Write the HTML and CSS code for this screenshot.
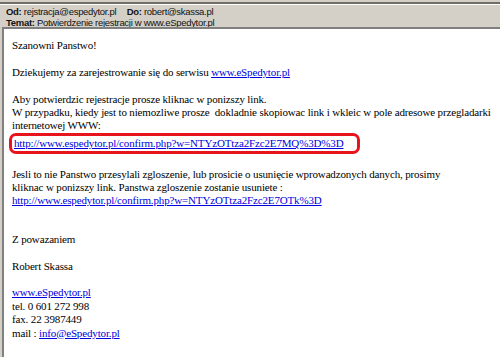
FILE: index.html
```html
<!DOCTYPE html>
<html lang="pl">
<head>
    <meta charset="UTF-8">
    <title>Potwierdzenie rejestracji</title>
    <link rel="stylesheet" href="styles.css">
</head>
<body>
    <div class="header">
        <div class="row">
            <b>Od:</b> <span>rejstracja@espedytor.pl</span>
            <b class="to">Do:</b> <span>robert@skassa.pl</span>
        </div>
        <div class="row">
            <b>Temat:</b> <span>Potwierdzenie rejestracji w www.eSpedytor.pl</span>
        </div>
    </div>

    <div class="message">
        <p>Szanowni Panstwo!</p>
        <p>Dziekujemy za zarejestrowanie się do serwisu <a href="#">www.eSpedytor.pl</a></p>
        <p>Aby potwierdzic rejestracje prosze kliknac w ponizszy link.<br>
        W przypadku, kiedy jest to niemozliwe prosze&nbsp; dokladnie skopiowac link i wkleic w pole adresowe przegladarki<br>
        internetowej WWW:<br>
        <span class="marked"><a href="#">http://www.espedytor.pl/confirm.php?w=NTYzOTtza2Fzc2E7MQ%3D%3D</a></span></p>
        <p>Jesli to nie Panstwo przesylali zgloszenie, lub prosicie o usunięcie wprowadzonych danych, prosimy<br>
        kliknac w ponizszy link. Panstwa zgloszenie zostanie usuniete :<br>
        <a href="#">http://www.espedytor.pl/confirm.php?w=NTYzOTtza2Fzc2E7OTk%3D</a></p>
        <p class="sign">Z powazaniem</p>
        <p>Robert Skassa</p>
        <p><a href="#">www.eSpedytor.pl</a><br>
        tel. 0 601 272 998<br>
        fax. 22 3987449<br>
        mail : <a href="#">info@eSpedytor.pl</a></p>
    </div>
</body>
</html>
```

FILE: styles.css
```css
/* Window */
body {
    margin: 0;
    height: 357px;
    overflow: hidden;
    background: #d4d0c8;
    display: flex;
    flex-direction: column;
}

/* Header fields */
.header {
    border-top: 2px solid #6e6e66;
    box-shadow: inset 0 1px 0 #ffffff;
    margin-top: 2px;
    padding: 2px 0 1px 6px;
    height: 20px;
    font-family: "Liberation Sans", Arial, sans-serif;
    font-size: 9.5px;
    letter-spacing: -0.3px;
    line-height: 11px;
    color: #111;
}

.header b {
    font-weight: bold;
}

.header .to {
    margin-left: 8px;
}

/* Message body */
.message {
    flex: 1;
    margin-left: 2px;
    border-top: 2px solid #808080;
    border-left: 2px solid #808080;
    background: #fff;
    padding: 10px 0 0 8px;
    font-family: "Liberation Serif", "Times New Roman", serif;
    font-size: 11px;
    letter-spacing: -0.15px;
    line-height: 13.4px;
    color: #000;
}

.message p {
    margin: 0 0 13.4px;
}

.message .sign {
    margin-top: 25px;
}

.message a {
    color: #0000dd;
}

.marked {
    display: inline-block;
    margin: 0 0 0 -3px;
    padding: 1px 14px 1px 2px;
    border: 3px solid #e8141b;
    border-radius: 7px;
}
```
